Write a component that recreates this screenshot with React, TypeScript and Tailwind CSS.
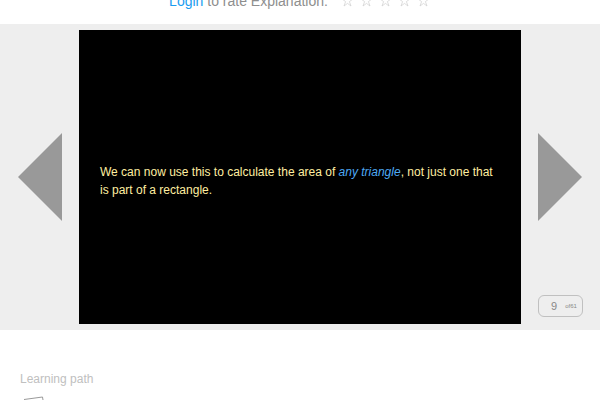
const STARS = [1, 2, 3, 4, 5];

function RatingHeader() {
  return (
    <header className="flex h-6 items-end justify-center pb-[13px] text-sm text-[#8e8e8e]">
      <p className="whitespace-nowrap">
        <a href="#login" className="text-[#1a9cf0]">Login</a> to rate Explanation:
      </p>
      <div className="ml-3 flex h-5 items-start gap-1 pt-1 text-[#cfcfcf]">
        {STARS.map((n) => (
          <button key={n} type="button" aria-label={`Rate ${n}`} className="flex w-[15px] justify-center">
            <svg width="13" height="12" viewBox="0 0 13 12" fill="none" stroke="currentColor" strokeWidth="0.7">
              <path d="M6.5 0.5 7.6 4.3H11.5L8.4 6.6 10 11 6.5 8.4 3 11 4.6 6.6 1.5 4.3H5.4Z" />
            </svg>
          </button>
        ))}
      </div>
    </header>
  );
}

function Arrow({ label, points }: { label: string; points: string }) {
  return (
    <button type="button" aria-label={label} className="row-start-2 text-[#999999]">
      <svg width="44" height="88" viewBox="0 0 44 88" fill="currentColor" className="block">
        <polygon points={points} />
      </svg>
    </button>
  );
}

export default function App() {
  return (
    <main className="h-screen overflow-hidden bg-white font-['Liberation_Sans',Arial,sans-serif]">
      <RatingHeader />
      <section className="flex bg-[#eeeeee] py-1.5">
        <div className="grid w-[79px] shrink-0 grid-rows-[1fr_auto_1fr] justify-end pr-[17px]">
          <Arrow label="Previous slide" points="44,0 44,88 0,44" />
        </div>
        <article className="flex min-h-[294px] flex-1 items-center bg-black px-[21px] pt-2 text-xs leading-[18px] text-[#ffeea0]">
          <p>
            We can now use this to calculate the area of <em className="text-[#4eaaf5]">any triangle</em>, not just one
            that is part of a rectangle.
          </p>
        </article>
        <div className="grid w-[79px] shrink-0 grid-rows-[1fr_auto_1fr] justify-start pl-[17px]">
          <Arrow label="Next slide" points="0,0 44,44 0,88" />
          <div className="row-start-3 mb-[7px] flex h-[22px] w-[45px] items-center gap-2 self-end rounded-md border border-[#c0c0c0] pl-3 text-[#888888]">
            <span className="text-[11px] leading-4">9</span>
            <span className="pb-px text-[6px] leading-4">of61</span>
          </div>
        </div>
      </section>
      <section className="px-5 pt-10">
        <h2 className="text-xs leading-[18px] text-[#c0c0c0]">Learning path</h2>
        <svg width="24" height="32" viewBox="0 0 24 32" fill="none" stroke="#999999" className="mt-2 ml-1">
          <path d="M0 3.5 18.5 1 19 4 V26 L0 30Z" />
        </svg>
      </section>
    </main>
  );
}
